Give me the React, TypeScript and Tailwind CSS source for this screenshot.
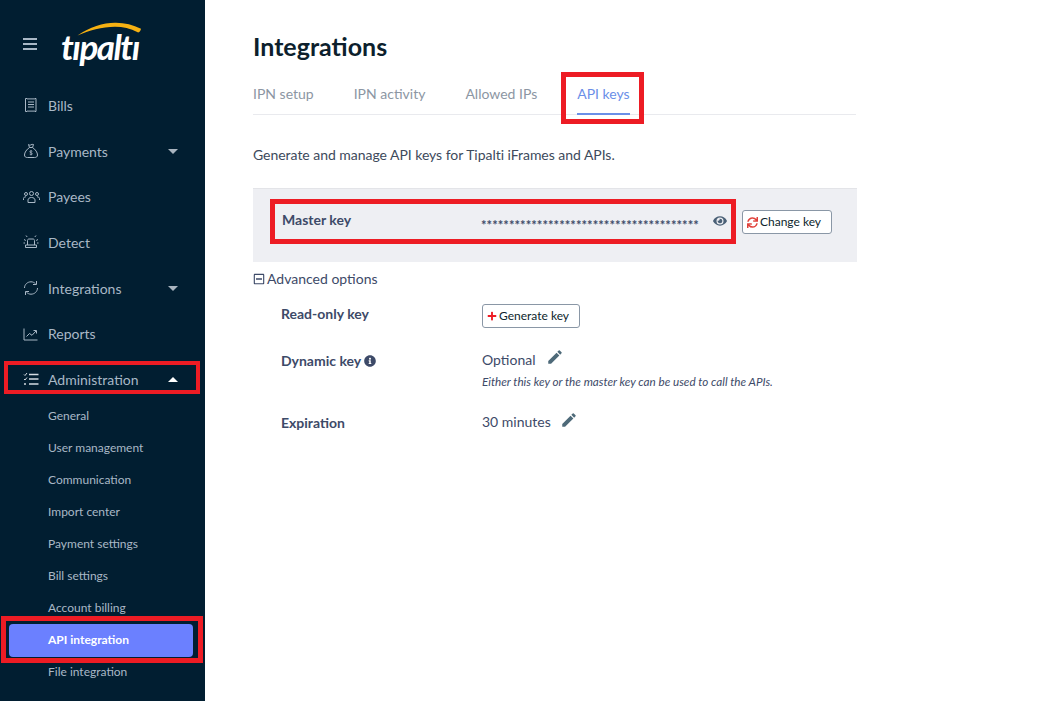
import React from 'react';
import { FaEye, FaInfoCircle, FaPlus, FaRegMinusSquare, FaSync } from 'react-icons/fa';
import { MdEdit } from 'react-icons/md';

const iconProps = {
  width: 16,
  height: 16,
  viewBox: '0 0 16 16',
  fill: 'none',
  stroke: 'currentColor',
  strokeWidth: 1,
  className: 'shrink-0',
};

const BillsIcon = () => (
  <svg {...iconProps}>
    <path d="M2.500 1.500h1.500l1 .8 1-.8 1 .8 1-.8 1 .8 1-.8 1 .8 1-.8h1v13h-1l-1-.8-1 .8-1-.8-1 .8-1-.8-1 .8-1-.8-1 .8h-1.500z" />
    <path d="M5 5h6M5 7.500h6M5 10h6" />
  </svg>
);

const BagIcon = () => (
  <svg {...iconProps}>
    <path d="M5.500 1.500c1 .8 1.700.8 2.500.3.800-.5 1.500-.5 2.500-.3L9.500 4.500h-3z" />
    <path d="M6.500 4.500C3.500 6.500 1.500 9.500 1.500 12c0 1.800 1.200 2.500 3 2.500h7c1.800 0 3-.7 3-2.500 0-2.500-2-5.500-5-7.500" />
    <path d="M9.300 8.300c-.5-.6-2.500-.7-2.500.5s2.500.8 2.500 2-2 1.100-2.600.4M8 7.200v5" strokeWidth="0.8" />
  </svg>
);

const PayeesIcon = () => (
  <svg {...iconProps} width={17} viewBox="0 0 17 16">
    <circle cx="8.500" cy="4.500" r="2" />
    <path d="M5 13.500v-2.500c0-1.500 1.500-2.500 3.500-2.500s3.500 1 3.500 2.500v2.500z" />
    <circle cx="3" cy="5" r="1.500" />
    <circle cx="14" cy="5" r="1.500" />
    <path d="M.5 11V9.500c0-1 1-1.700 2.500-1.700M16.500 11V9.500c0-1-1-1.700-2.500-1.700" />
  </svg>
);

const DetectIcon = () => (
  <svg {...iconProps}>
    <path d="M4.500 11V6.500c0-1 .7-1.500 1.500-1.500h4c.8 0 1.500.5 1.500 1.500V11" />
    <path d="M2.500 13.500v-2.500h11v2.500z" />
    <path d="M1 5.500l1.800 1M15 5.500l-1.800 1M3 1.500l1.200 1.500M13 1.500l-1.200 1.500M.5 9h1.500M14 9h1.500" />
  </svg>
);

const SyncIcon = () => (
  <svg {...iconProps}>
    <path d="M1.500 8C1.500 4.500 4.500 1.800 8 1.800c1.800 0 3.300.7 4.500 2" />
    <path d="M14.500 8c0 3.500-3 6.200-6.500 6.200-1.800 0-3.300-.7-4.500-2" />
    <path d="M13.500 1v3.500H10M2.500 15v-3.500H6" />
  </svg>
);

const ReportsIcon = () => (
  <svg {...iconProps}>
    <path d="M1 2.500v11.500h13.500" />
    <path d="M3.500 10.500l3-3 2.500 1.800L13 5" />
    <path d="M10.500 4.500h3v3" />
  </svg>
);

const AdminIcon = () => (
  <svg {...iconProps}>
    <path d="M1 3.500l1 1 2-2.500M1 8l1 1 2-2.500" />
    <circle cx="2" cy="13" r=".6" fill="currentColor" />
    <path d="M6 3.500h9.500M6 8h9.500M6 13h9.500" strokeWidth="1.300" />
  </svg>
);

const Caret = ({ up = false }: { up?: boolean }) => (
  <span
    className={
      up
        ? 'ml-auto mr-[27px] h-0 w-0 border-x-[5px] border-b-[5px] border-x-transparent border-b-white'
        : 'ml-auto mr-[27px] h-0 w-0 border-x-[5px] border-t-[5px] border-x-transparent border-t-[#a9b4bf]'
    }
  />
);

const mainItems = [
  { label: 'Bills', icon: <BillsIcon />, h: 'h-[46px]' },
  { label: 'Payments', icon: <BagIcon />, h: 'h-[46px]', caret: true },
  { label: 'Payees', icon: <PayeesIcon />, h: 'h-[45px]' },
  { label: 'Detect', icon: <DetectIcon />, h: 'h-[46px]' },
  { label: 'Integrations', icon: <SyncIcon />, h: 'h-[46px]', caret: true },
  { label: 'Reports', icon: <ReportsIcon />, h: 'h-[45px]' },
];

const subItems = [
  'General',
  'User management',
  'Communication',
  'Import center',
  'Payment settings',
  'Bill settings',
  'Account billing',
];

const Sidebar = () => (
  <aside className="relative h-[701px] w-[205px] shrink-0 overflow-hidden bg-[#011e31] text-[#a9b8c6]">
    <div className="relative flex h-[82px] items-center pl-[23px]">
      <div className="flex w-[14px] flex-col gap-[3px] pt-[6px]">
        <span className="h-[2px] bg-[#a9b8c6]" />
        <span className="h-[2px] bg-[#a9b8c6]" />
        <span className="h-[2px] bg-[#a9b8c6]" />
      </div>
      <span className="absolute left-[61px] top-[24px] text-[35px] font-bold italic leading-[44px] tracking-[-1.5px] text-white">
        tıpaltı
      </span>
      <svg className="absolute left-[77px] top-[21px]" width="65" height="16" viewBox="0 0 65 16">
        <path d="M0.500 14.500C13 6 27 1.500 39 1.800c9 .2 17 2 25 6-.3 2-1.300 3.300-2.800 3.700C53 7.500 46 5.800 38 5.800 25 5.800 12 9.500 .5 14.500z" fill="#f6b112" />
      </svg>
    </div>

    <nav className="mb-[-2px] text-[14px]">
      {mainItems.map((item) => (
        <div key={item.label} className={`flex items-center ${item.h} pl-[23px]`}>
          <span className="flex w-[25px] shrink-0">{item.icon}</span>
          <span>{item.label}</span>
          {item.caret && <Caret />}
        </div>
      ))}
      <div className="relative flex h-[46px] items-center pl-[23px]">
        <span className="flex w-[25px] shrink-0 text-[#d4dbe2]">
          <AdminIcon />
        </span>
        <span>Administration</span>
        <Caret up />
        <span className="absolute left-[4px] top-[5px] h-[33px] w-[196px] border-[4px] border-[#ed1c24]" />
      </div>
    </nav>

    <div className="text-[12px]">
      {subItems.map((label) => (
        <div key={label} className="flex h-[32px] items-center pl-[48px]">
          {label}
        </div>
      ))}
      <div className="relative flex h-[32px] items-center">
        <div className="ml-[9px] flex h-[33px] w-[184px] shrink-0 items-center rounded-[4px] bg-[#6b80ff] pl-[39px] font-bold text-white">
          API integration
        </div>
        <span className="absolute left-[1px] top-[-8px] h-[47px] w-[202px] border-[5px] border-[#ed1c24]" />
      </div>
      <div className="flex h-[32px] items-center pl-[48px]">File integration</div>
    </div>
  </aside>
);

const tabs = ['IPN setup', 'IPN activity', 'Allowed IPs'];

const Content = () => (
  <main className="ml-[48px] w-[604px] text-[14px] text-[#3d4a68]">
    <h1 className="mt-[31px] text-[25px] font-bold leading-[30px] text-[#0d1f2d]">Integrations</h1>

    <div className="mt-[11px] flex h-[43px] w-[603px] gap-[40px] border-b border-[#e9eaee]">
      {tabs.map((tab) => (
        <div key={tab} className="pt-[12px] leading-[20px] text-[#8c96a3]">
          {tab}
        </div>
      ))}
      <div className="relative h-[43px] border-b-2 border-[#6b8fe8] pt-[12px] leading-[20px] text-[#6b8fe8]">
        API keys
        <span className="absolute left-[-16px] top-0 h-[52px] w-[83px] border-[5px] border-[#ed1c24]" />
      </div>
    </div>

    <p className="mt-[30px] leading-[20px] tracking-[-0.035px] text-[#3d4a5c]">Generate and manage API keys for Tipalti iFrames and APIs.</p>

    <section className="mt-[23px] flex h-[74px] w-[604px] items-center border-t border-[#e3e4e8] bg-[#eeeff3] pb-[13px] pl-[29px]">
      <div className="relative flex w-[454px] items-center">
        <span className="w-[199px] font-bold">Master key</span>
        <span className="mt-[5px] translate-y-[3px] text-[13px] font-bold leading-[14px] tracking-[0.06px]">
          ***************************************
        </span>
        <FaEye className="absolute left-[431px] top-[5px] text-[#4a6076]" size={14} />
        <span className="absolute left-[-12px] top-[-10px] h-[45px] w-[466px] border-[5px] border-[#ed1c24]" />
      </div>
      <button className="ml-[6px] mt-[6px] flex h-[24px] w-[90px] items-center rounded-[3px] border border-[#8a97a6] bg-white pl-[4px] text-[12px] text-[#0d1f2d]">
        <FaSync className="mr-[2px] text-[#e0403a]" size={11} />
        Change key
      </button>
    </section>

    <div className="mt-[7px] flex items-center leading-[20px]">
      <FaRegMinusSquare className="mr-[2px] text-[#3d4a68]" size={12} />
      Advanced options
    </div>

    <div className="mt-[15px] flex h-[34px] pl-[28px]">
      <span className="w-[201px] pt-[1px] font-bold leading-[18px]">Read-only key</span>
      <button className="flex h-[24px] w-[98px] items-center rounded-[3px] border border-[#8a97a6] bg-white pl-[4px] text-[12px] text-[#0d1f2d]">
        <FaPlus className="mr-[2px] text-[#ed1c24]" size={10} />
        Generate key
      </button>
    </div>

    <div className="mt-[10px] flex pl-[28px]">
      <span className="flex w-[201px] items-center self-start pt-[4px] font-bold leading-[18px]">
        Dynamic key
        <FaInfoCircle className="ml-[3px] text-[#3d4a68]" size={12} />
      </span>
      <div>
        <div className="flex h-[22px] items-center">
          Optional
          <MdEdit className="ml-[11px] mt-[-4px] text-[#4e6a79]" size={18} />
        </div>
        <div className="mt-[4px] text-[11.700px] italic leading-[14px]">Either this key or the master key can be used to call the APIs.</div>
      </div>
    </div>

    <div className="mt-[22px] flex pl-[28px]">
      <span className="w-[201px] pt-[4px] font-bold leading-[18px]">Expiration</span>
      <div className="flex h-[22px] items-center">
        30 minutes
        <MdEdit className="ml-[9px] mt-[-3px] text-[#4e6a79]" size={18} />
      </div>
    </div>
  </main>
);

export default function App() {
  return (
    <div className="flex h-[701px] w-[1062px] overflow-hidden bg-white font-['Lato',sans-serif]">
      <Sidebar />
      <Content />
    </div>
  );
}
